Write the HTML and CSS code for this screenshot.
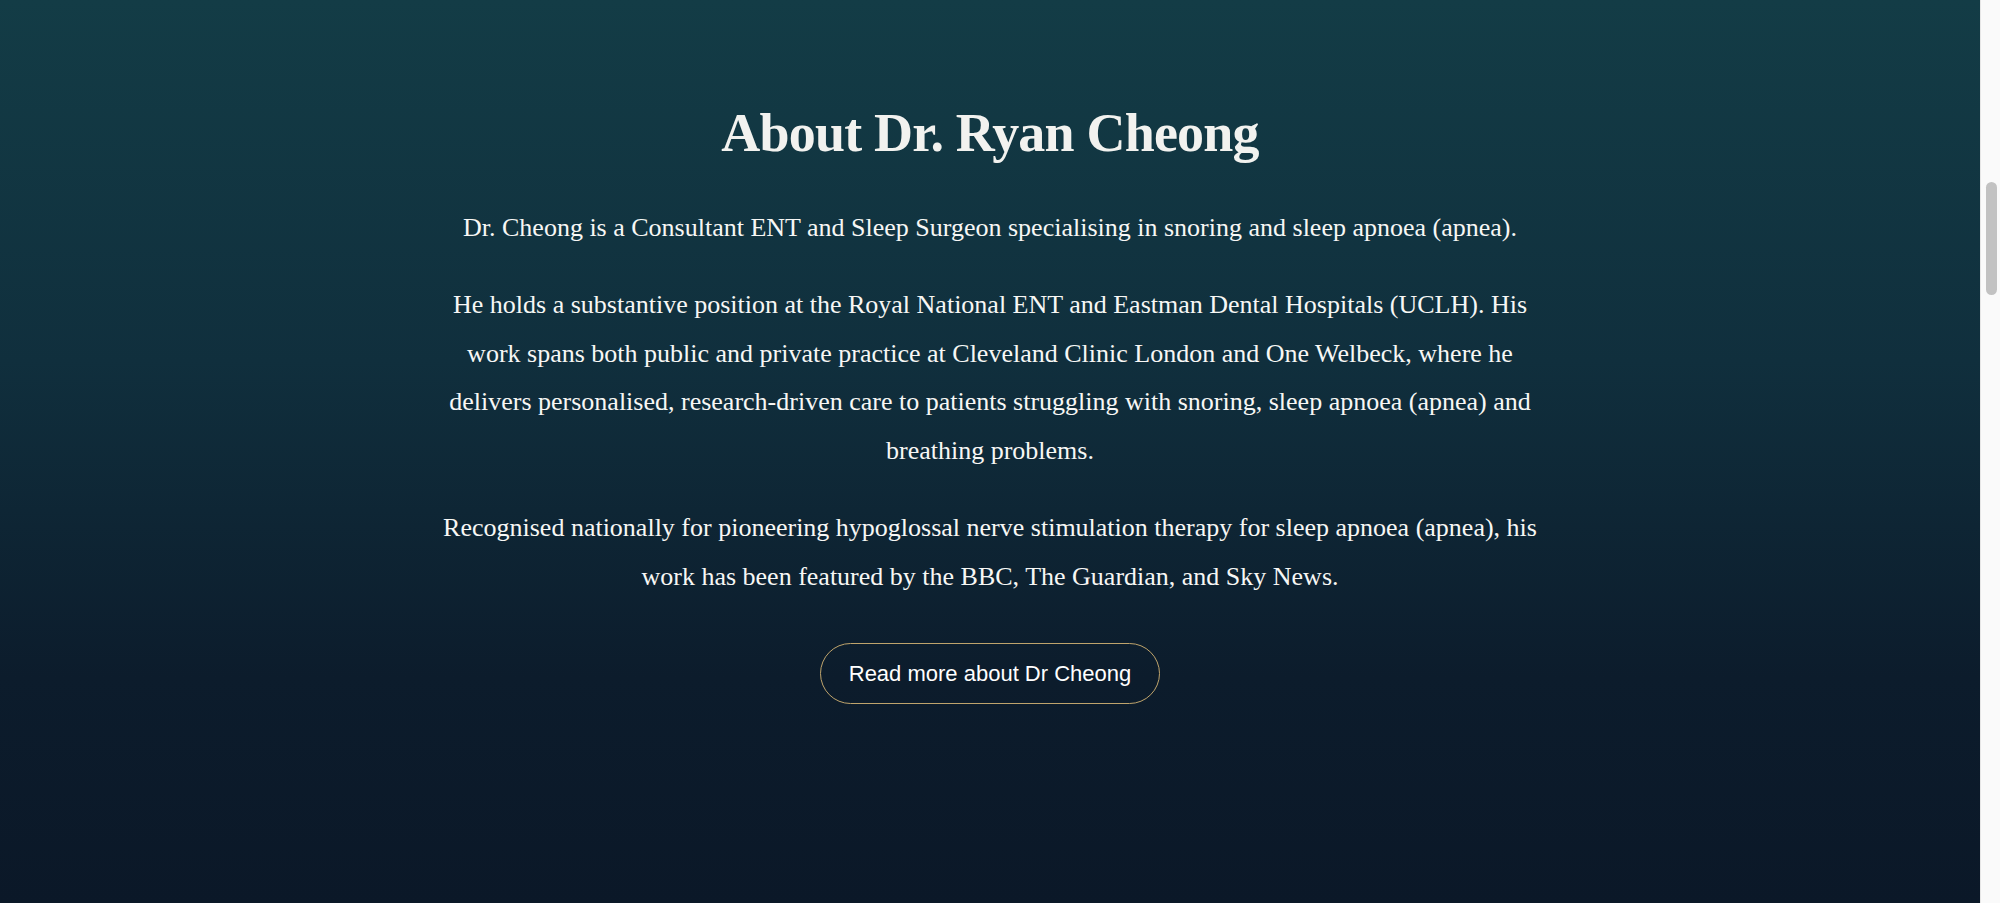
FILE: index.html
```html
<!DOCTYPE html>
<html lang="en">
<head>
  <meta charset="UTF-8">
  <meta name="viewport" content="width=device-width, initial-scale=1.0">
  <title>About Dr. Ryan Cheong</title>
  <link rel="stylesheet" href="styles.css">
</head>

<body>
  <div id="page">
    <section class="about">
      <h2 class="about-title">About Dr. Ryan Cheong</h2>
      <div class="about-text">
        <p>Dr. Cheong is a Consultant ENT and Sleep Surgeon specialising in snoring and sleep apnoea (apnea).</p>
        <p>He holds a substantive position at the Royal National ENT and Eastman Dental Hospitals (UCLH). His work spans both public and private practice at Cleveland Clinic London and One Welbeck, where he delivers personalised, research-driven care to patients struggling with snoring, sleep apnoea (apnea) and breathing problems.</p>
        <p>Recognised nationally for pioneering hypoglossal nerve stimulation therapy for sleep apnoea (apnea), his work has been featured by the BBC, The Guardian, and Sky News.</p>
      </div>
      <a class="more-btn" href="#">Read more about Dr Cheong</a>
    </section>
  </div>
  <div class="scrollbar">
    <div class="thumb"></div>
  </div>
</body>

</html>
```

FILE: styles.css
```css
html,
body {
  height: 100%;
}

body {
  margin: 0;
  padding: 0;
  display: flex;
  overflow: hidden;
  background: linear-gradient(180deg, #133c46 0%, #102f3d 40%, #0c1c2c 75%, #0b1828 100%);
  color: #f7f7f5;
  font-family: 'Liberation Serif', 'Times New Roman', serif;
}

#page {
  flex: 1;
}

.about {
  display: flex;
  flex-direction: column;
  align-items: center;
  padding-top: 101px;
  text-align: center;
}

.about-title {
  margin: 0 0 39px;
  font-size: 54px;
  font-weight: bold;
  line-height: 64px;
  letter-spacing: -0.8px;
  color: #f2f2ef;
}

.about-text {
  width: 1100px;
}

.about-text p {
  margin: 0 0 28px;
  font-size: 26px;
  line-height: 48.8px;
}

.more-btn {
  display: inline-block;
  margin-top: 13px;
  padding: 0 28px;
  height: 59px;
  line-height: 59px;
  border: 1.5px solid #bfa46c;
  border-radius: 40px;
  color: #ffffff;
  font-family: 'Liberation Sans', Arial, sans-serif;
  font-size: 22px;
  text-decoration: none;
}

.scrollbar {
  width: 20px;
  flex-shrink: 0;
  background: #fafafa;
  border-left: 1px solid #e6e6e6;
  box-sizing: border-box;
}

.thumb {
  width: 11px;
  height: 113px;
  margin: 182px 0 0 5px;
  border-radius: 6px;
  background: #c2c2c2;
}
```
